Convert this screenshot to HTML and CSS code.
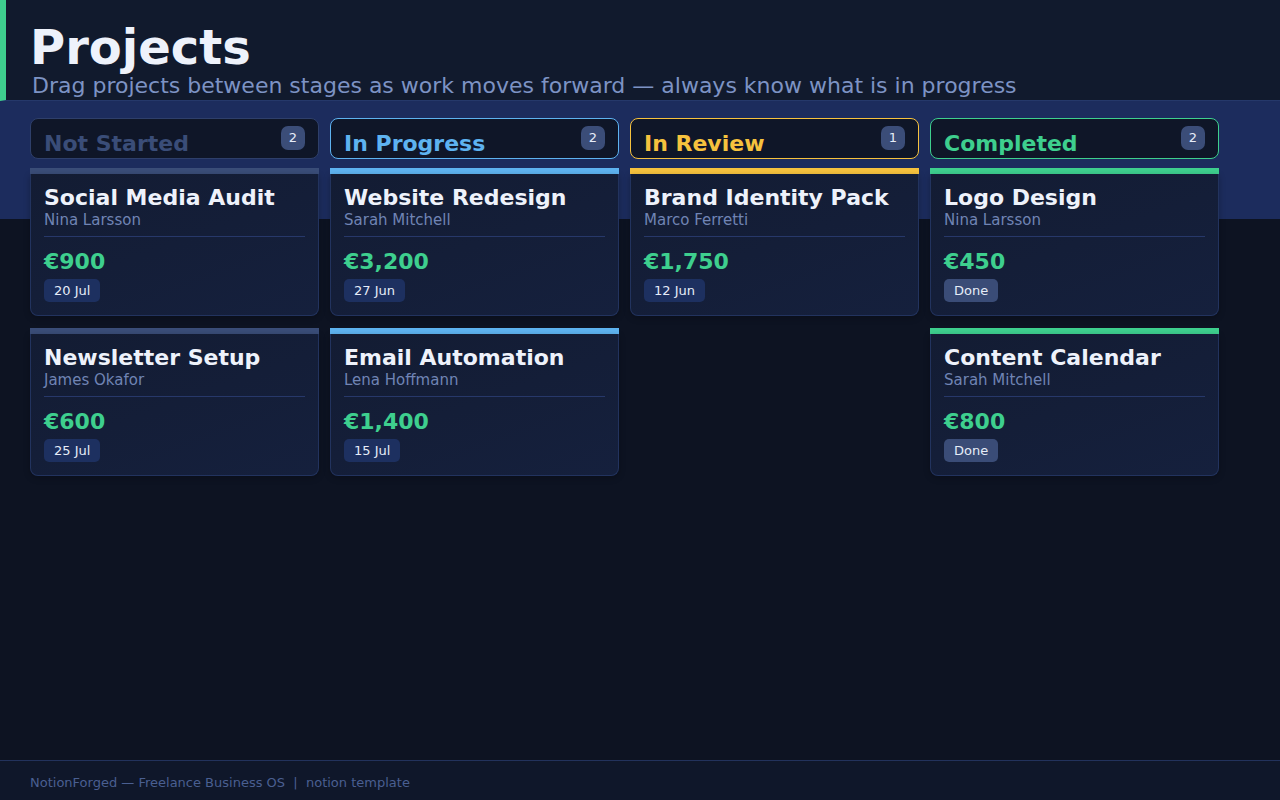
FILE: index.html
```html
<!DOCTYPE html>
<html lang="en">
<head>
    <meta charset="UTF-8">
    <meta name="viewport" content="width=device-width, initial-scale=1.0">
    <title>Projects</title>
    <link rel="stylesheet" href="styles.css">
</head>
<body>

<header class="page-header">
    <h1>Projects</h1>
    <p class="subtitle">Drag projects between stages as work moves forward — always know what is in progress</p>
</header>

<main class="board">
    <!-- Not Started -->
    <section class="column stage-todo">
        <div class="column-head">
            <h2>Not Started</h2>
            <span class="count">2</span>
        </div>
        <article class="card">
            <div class="card-bar"></div>
            <div class="card-body">
                <h3>Social Media Audit</h3>
                <p class="client">Nina Larsson</p>
                <p class="price">€900</p>
                <span class="pill">20 Jul</span>
            </div>
        </article>
        <article class="card">
            <div class="card-bar"></div>
            <div class="card-body">
                <h3>Newsletter Setup</h3>
                <p class="client">James Okafor</p>
                <p class="price">€600</p>
                <span class="pill">25 Jul</span>
            </div>
        </article>
    </section>

    <!-- In Progress -->
    <section class="column stage-doing">
        <div class="column-head">
            <h2>In Progress</h2>
            <span class="count">2</span>
        </div>
        <article class="card">
            <div class="card-bar"></div>
            <div class="card-body">
                <h3>Website Redesign</h3>
                <p class="client">Sarah Mitchell</p>
                <p class="price">€3,200</p>
                <span class="pill">27 Jun</span>
            </div>
        </article>
        <article class="card">
            <div class="card-bar"></div>
            <div class="card-body">
                <h3>Email Automation</h3>
                <p class="client">Lena Hoffmann</p>
                <p class="price">€1,400</p>
                <span class="pill">15 Jul</span>
            </div>
        </article>
    </section>

    <!-- In Review -->
    <section class="column stage-review">
        <div class="column-head">
            <h2>In Review</h2>
            <span class="count">1</span>
        </div>
        <article class="card">
            <div class="card-bar"></div>
            <div class="card-body">
                <h3>Brand Identity Pack</h3>
                <p class="client">Marco Ferretti</p>
                <p class="price">€1,750</p>
                <span class="pill">12 Jun</span>
            </div>
        </article>
    </section>

    <!-- Completed -->
    <section class="column stage-done">
        <div class="column-head">
            <h2>Completed</h2>
            <span class="count">2</span>
        </div>
        <article class="card">
            <div class="card-bar"></div>
            <div class="card-body">
                <h3>Logo Design</h3>
                <p class="client">Nina Larsson</p>
                <p class="price">€450</p>
                <span class="pill pill-done">Done</span>
            </div>
        </article>
        <article class="card">
            <div class="card-bar"></div>
            <div class="card-body">
                <h3>Content Calendar</h3>
                <p class="client">Sarah Mitchell</p>
                <p class="price">€800</p>
                <span class="pill pill-done">Done</span>
            </div>
        </article>
    </section>
</main>

<footer class="page-footer">
    NotionForged — Freelance Business OS &nbsp;|&nbsp; notion template
</footer>

</body>
</html>
```

FILE: styles.css
```css
* {
    box-sizing: border-box;
}
body {
    margin: 0;
    min-height: 100vh;
    display: flex;
    flex-direction: column;
    font-family: "DejaVu Sans", Verdana, sans-serif;
    background-color: #0d1322;
    color: #eef2fb;
}
h1, h2, h3, p {
    margin: 0;
}

/* header */
.page-header {
    height: 101px;
    padding: 18px 0 0 26px;
    background-color: #111a2d;
    border-left: 6px solid #3ecf8e;
    border-bottom: 1px solid #25386a;
}
.page-header h1 {
    margin-left: -2px;
    font-size: 48px;
    line-height: 58px;
    font-weight: bold;
    color: #eef2fb;
}
.subtitle {
    margin-top: -4px;
    font-size: 22px;
    line-height: 28px;
    color: #7d93c4;
}

/* board */
.board {
    flex: 1;
    display: grid;
    grid-template-columns: repeat(4, 289px);
    gap: 11px;
    align-items: start;
    padding: 17px 30px;
    background: linear-gradient(to bottom, #1c2c5d 0, #1c2c5d 118px, transparent 118px);
}
.column {
    display: flex;
    flex-direction: column;
    gap: 12px;
}
.column-head {
    height: 41px;
    display: flex;
    justify-content: space-between;
    align-items: flex-start;
    padding: 0 13px;
    margin-bottom: -3px;
    border: 1px solid #2e3f6a;
    border-radius: 8px;
    background-color: #0f1628;
    overflow: hidden;
}
.column-head h2 {
    margin-top: 12px;
    font-size: 22px;
    line-height: 26px;
    font-weight: bold;
}
.count {
    margin-top: 7px;
    width: 24px;
    height: 24px;
    line-height: 24px;
    text-align: center;
    border-radius: 7px;
    background-color: #3b4d78;
    color: #e6ecf8;
    font-size: 13px;
}

/* cards */
.card-bar {
    height: 6px;
}
.card-body {
    padding: 12px 13px 13px;
    border: 1px solid #22335e;
    border-top: none;
    border-radius: 0 0 8px 8px;
    background: linear-gradient(160deg, #131c33, #15203d);
    box-shadow: 0 2px 6px rgba(0, 0, 0, 0.25);
}
.card-body h3 {
    font-size: 22px;
    line-height: 24px;
    font-weight: bold;
    color: #eef2fb;
}
.client {
    font-size: 15px;
    line-height: 20px;
    color: #7084b4;
    padding-bottom: 6px;
    border-bottom: 1px solid #27386a;
}
.price {
    margin-top: 12px;
    font-size: 22px;
    line-height: 26px;
    font-weight: bold;
    color: #3ecf8e;
}
.pill {
    display: inline-block;
    margin-top: 4px;
    height: 23px;
    line-height: 23px;
    padding: 0 10px;
    border-radius: 5px;
    background-color: #1d3060;
    color: #e6ecf8;
    font-size: 13px;
}
.pill-done {
    background-color: #3a4c77;
}

/* stage colours */
.stage-todo h2 { color: #3a4d78; }
.stage-todo .card-bar { background-color: #3a4d78; }
.stage-doing .column-head { border-color: #5eb3f0; }
.stage-doing h2 { color: #5eb3f0; }
.stage-doing .card-bar { background-color: #5eb3f0; }
.stage-review .column-head { border-color: #f6c23e; }
.stage-review h2 { color: #f6c23e; }
.stage-review .card-bar { background-color: #f6c23e; }
.stage-done .column-head { border-color: #3ecf8e; }
.stage-done h2 { color: #3ecf8e; }
.stage-done .card-bar { background-color: #3ecf8e; }

/* footer */
.page-footer {
    height: 40px;
    padding: 14px 30px 0;
    border-top: 1px solid #22325c;
    background-color: #0f172a;
    color: #4a5f91;
    font-size: 13px;
}
```
